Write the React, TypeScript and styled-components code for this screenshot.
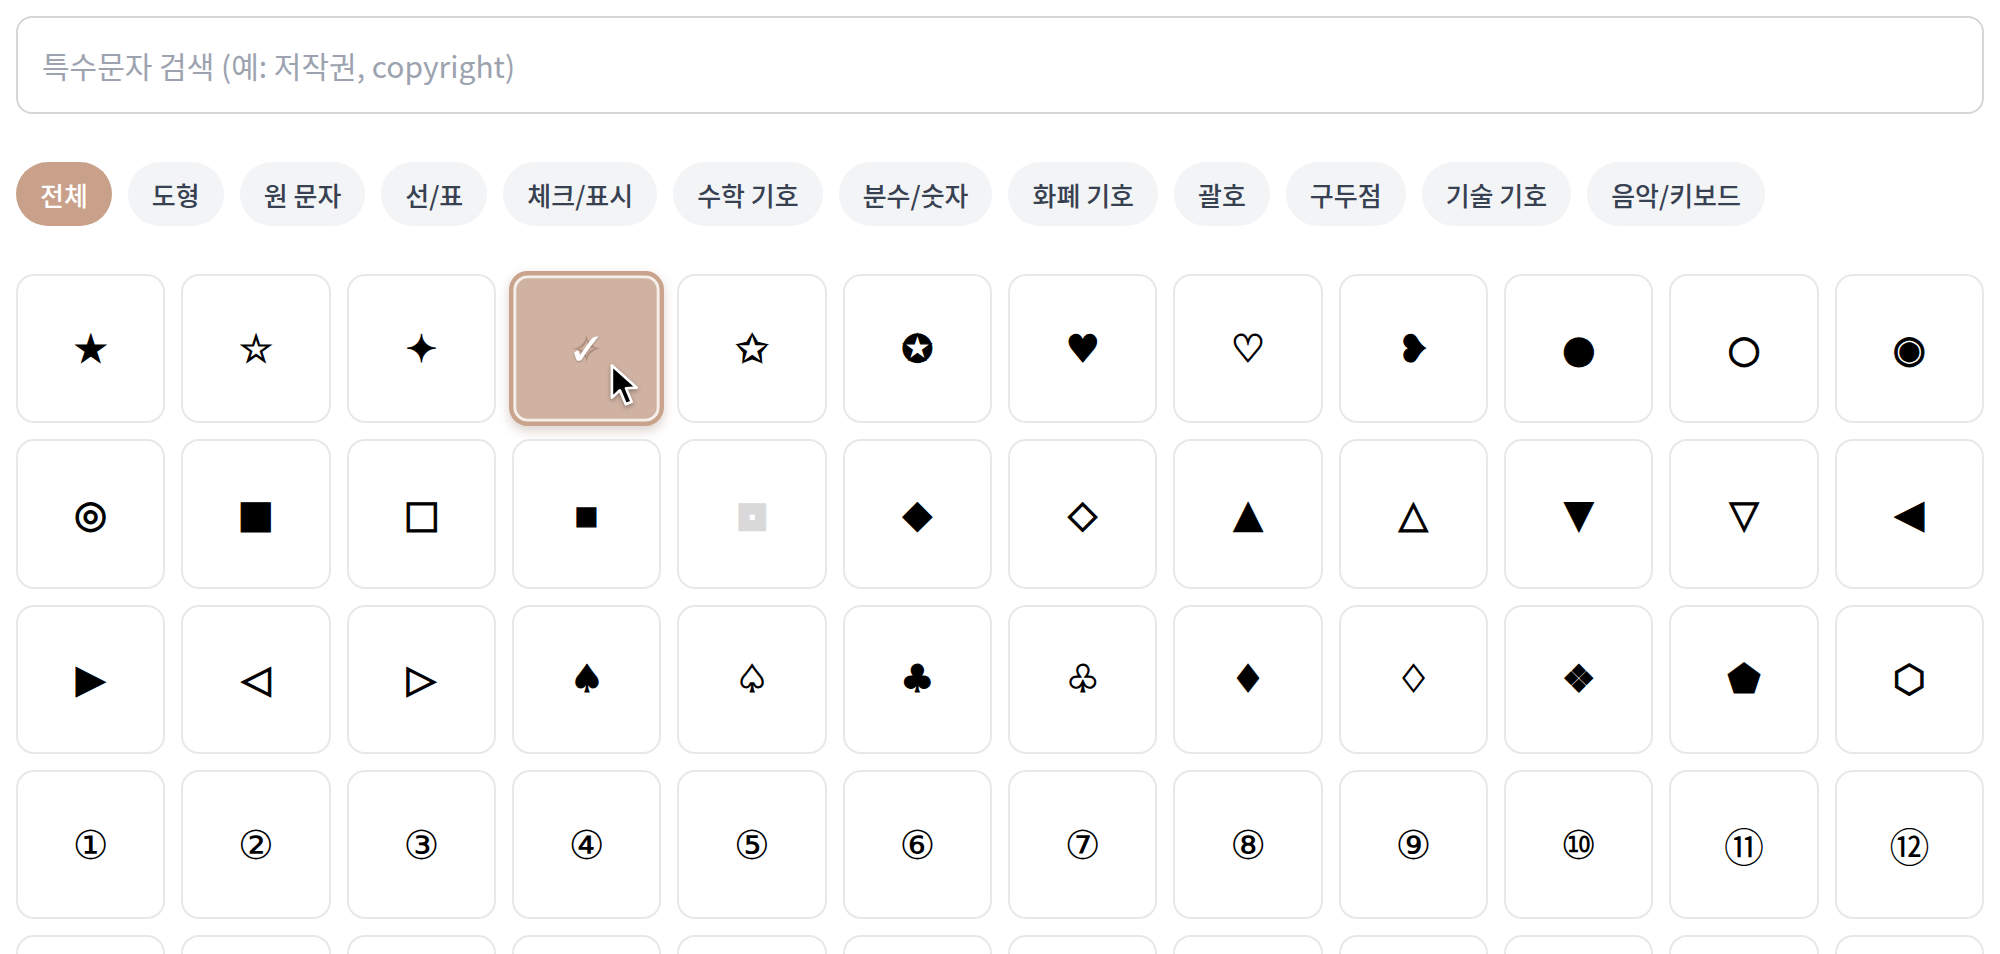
import * as React from 'react';
import styled, { createGlobalStyle } from 'styled-components';

const GlobalStyle = createGlobalStyle`
  html, body {
    margin: 0;
    background: #ffffff;
  }
  body {
    font-family: 'Noto Sans CJK KR', 'Noto Sans', sans-serif;
    color: #111827;
  }
`;

const CATEGORIES = [
  '전체',
  '도형',
  '원 문자',
  '선/표',
  '체크/표시',
  '수학 기호',
  '분수/숫자',
  '화폐 기호',
  '괄호',
  '구두점',
  '기술 기호',
  '음악/키보드',
];

const SYMBOLS = [
  '★', '☆', '✦', '✧', '✩', '✪', '♥', '♡', '❥', '●', '○', '◉',
  '◎', '■', '□', '▪', '▫', '◆', '◇', '▲', '△', '▼', '▽', '◀',
  '▶', '◁', '▷', '♠', '♤', '♣', '♧', '♦', '♢', '❖', '⬟', '⬡',
  '①', '②', '③', '④', '⑤', '⑥', '⑦', '⑧', '⑨', '⑩', '⑪', '⑫',
  '⑬', '⑭', '⑮', '⑯', '⑰', '⑱', '⑲', '⑳', '㉑', '㉒', '㉓', '㉔',
];

// circled numbers are drawn without the extra stroke so the digits stay open
const isCircled = (s: string) => /[\u2460-\u2473\u3251-\u325f]/.test(s);

const strokeFor = (light?: boolean, circled?: boolean) =>
  light ? '9px' : circled ? '0px' : '1.2px';

const Cursor = () => (
  <CursorMark viewBox="0 0 24 32" width="34" height="45">
    <path
      d="M2 2 L2 24 L7.5 19 L11.5 28.5 L15.5 26.8 L11.6 17.6 L19 17.2 Z"
      fill="#000"
      stroke="#fff"
      strokeWidth="1.8"
      strokeLinejoin="round"
    />
  </CursorMark>
);

const App: React.FC = () => {
  const [active, setActive] = React.useState('전체');
  const copied = 3;

  return (
    <Page>
      <GlobalStyle />
      <Search placeholder="특수문자 검색 (예: 저작권, copyright)" />
      <Chips>
        {CATEGORIES.map((c) => (
          <Chip key={c} $active={c === active} onClick={() => setActive(c)}>
            {c}
          </Chip>
        ))}
      </Chips>
      <Grid>
        {SYMBOLS.map((s, i) =>
          i === copied ? (
            <Card key={i} $copied>
              <Faded>{s}</Faded>
              <Check>✓</Check>
              <Cursor />
            </Card>
          ) : (
            <Card key={i} $light={s === '▫'} $circled={isCircled(s)}>
              {s}
            </Card>
          )
        )}
      </Grid>
    </Page>
  );
};

export default App;

const Page = styled.div`
  padding: 16px;
  display: flex;
  flex-direction: column;
  gap: 48px;
`;

const Search = styled.input`
  box-sizing: border-box;
  width: 100%;
  height: 98px;
  border: 2px solid #d4d6da;
  border-radius: 16px;
  padding: 0 24px;
  font-family: 'Noto Sans CJK KR', 'Noto Sans', sans-serif;
  font-size: 30px;
  color: #111827;
  outline: none;
  &::placeholder {
    color: #9ca3af;
  }
`;

const Chips = styled.div`
  display: flex;
  flex-wrap: wrap;
  gap: 16px;
`;

const Chip = styled.button<{ $active?: boolean }>`
  height: 64px;
  padding: 0 24px;
  border: none;
  border-radius: 999px;
  font-family: 'Noto Sans CJK KR', 'Noto Sans', sans-serif;
  font-size: 26px;
  font-weight: 500;
  background: ${(p) => (p.$active ? '#c9a18a' : '#f3f4f6')};
  color: ${(p) => (p.$active ? '#ffffff' : '#374151')};
  cursor: pointer;
`;

const Grid = styled.div`
  display: grid;
  grid-template-columns: repeat(12, 1fr);
  gap: 16px;
`;

const Card = styled.div<{ $copied?: boolean; $light?: boolean; $circled?: boolean }>`
  position: relative;
  box-sizing: border-box;
  aspect-ratio: 1;
  display: flex;
  align-items: center;
  justify-content: center;
  border: 2px solid #e7e8ea;
  border-radius: 18px;
  background: #ffffff;
  font-family: 'DejaVu Sans', 'Noto Sans CJK KR', sans-serif;
  font-size: ${(p) => (p.$circled ? '40px' : '38px')};
  color: ${(p) => (p.$light ? '#d9d9d9' : '#000000')};
  -webkit-text-stroke: ${(p) => strokeFor(p.$light, p.$circled)} currentColor;
  ${(p) =>
    p.$copied &&
    `
    background: #cfb2a2;
    border: 4px solid #c9a38b;
    box-shadow: inset 0 0 0 3px #f6eee9, 0 4px 10px rgba(120, 80, 60, 0.25);
    transform: scale(1.04);
  `}
`;

const Faded = styled.span`
  position: absolute;
  color: rgba(90, 60, 45, 0.3);
  -webkit-text-stroke: 0;
`;

const Check = styled.span`
  position: absolute;
  color: #ffffff;
  font-size: 44px;
  -webkit-text-stroke: 0;
  text-shadow: 0 1px 2px rgba(0, 0, 0, 0.25);
`;

const CursorMark = styled.svg`
  position: absolute;
  left: 92px;
  top: 84px;
  filter: drop-shadow(0 2px 2px rgba(0, 0, 0, 0.3));
`;
